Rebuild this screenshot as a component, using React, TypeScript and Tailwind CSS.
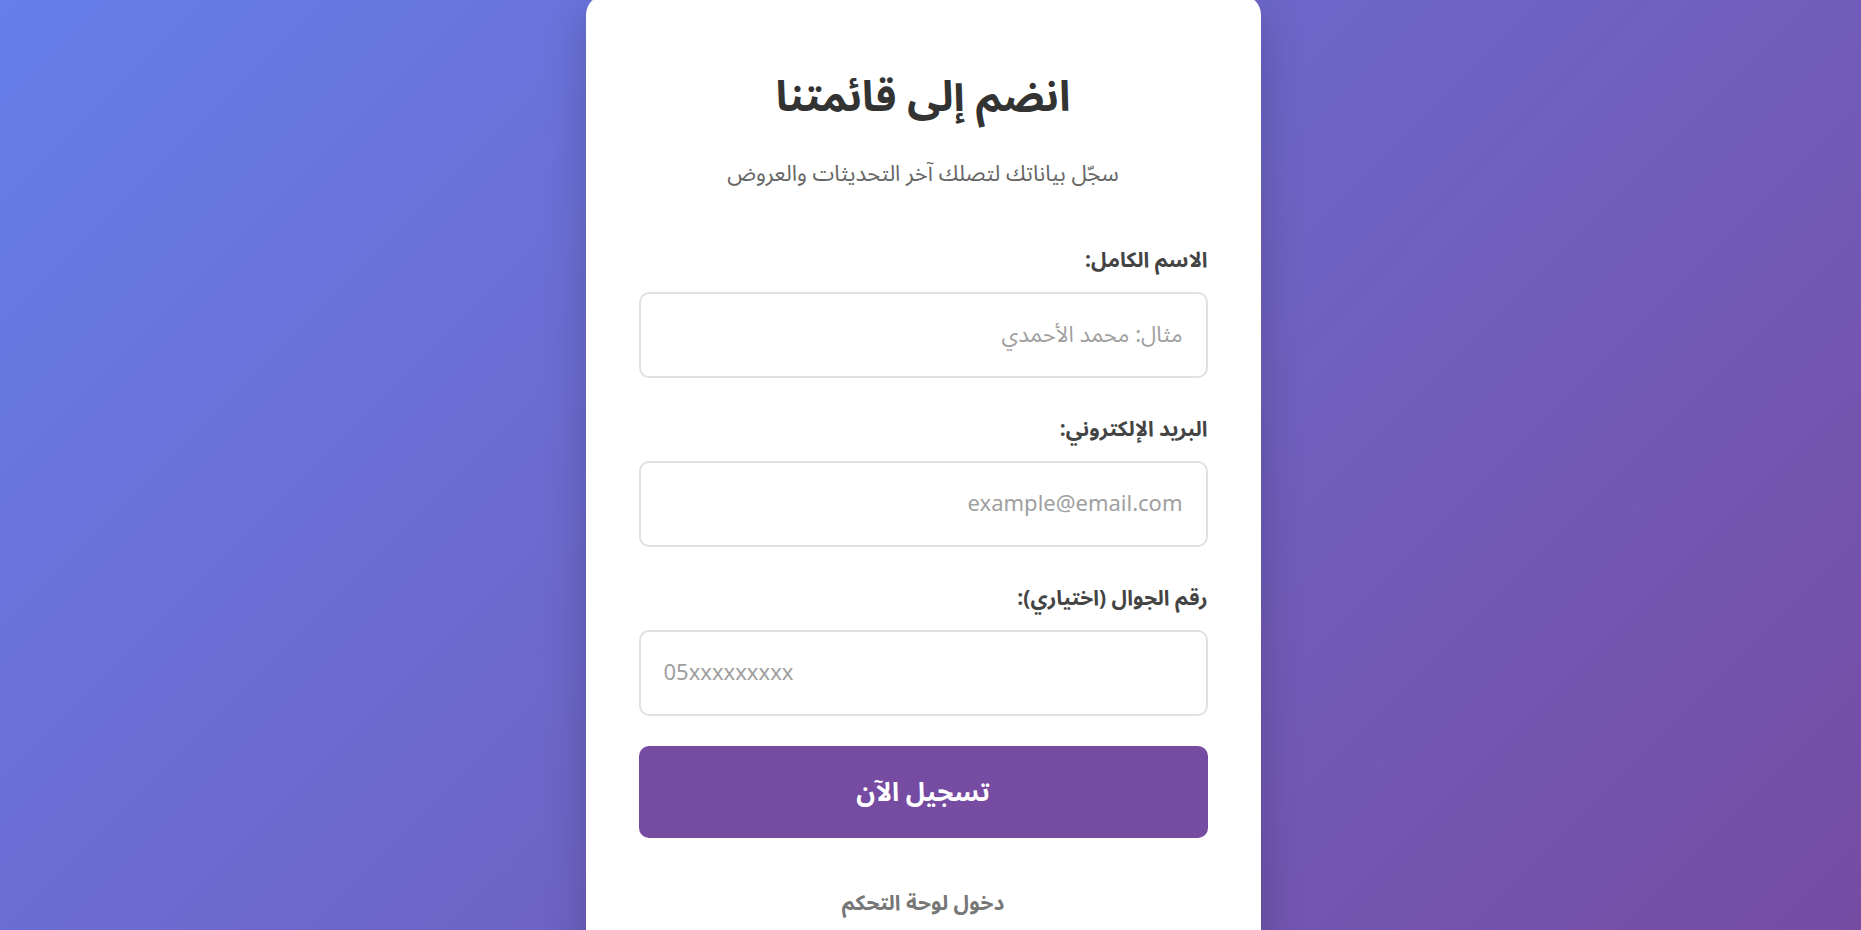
import React, { useState } from "react"

const fieldClass =
  "w-full h-[86px] px-[23px] border-2 border-[#e1e1e1] rounded-[10px] bg-white text-[22px] text-[#333] placeholder:text-[#a0a0a0] outline-none focus:border-[#764ba2]"

const labelClass = "block text-[21px] leading-[26px] font-bold text-[#444] mb-[19px]"

const App = () => {
  const [form, setForm] = useState({ name: "", email: "", phone: "" })

  const update = (key: "name" | "email" | "phone") => (e: React.ChangeEvent<HTMLInputElement>) =>
    setForm({ ...form, [key]: e.target.value })

  return (
    <div
      dir="rtl"
      className="min-h-screen w-full overflow-hidden flex justify-center bg-[linear-gradient(135deg,#667eea_0%,#764ba2_100%)] font-['Noto_Sans_Arabic','DejaVu_Sans',sans-serif]"
    >
      <div className="w-[675px] -mt-[5px] mr-[15px] bg-white rounded-[20px] px-[53px] pt-[77px] pb-[40px] shadow-[0_15px_45px_rgba(0,0,0,0.2)] self-start">
        <h1 className="text-center text-[42px] leading-[52px] font-bold text-[#333]">انضم إلى قائمتنا</h1>
        <p className="mt-[35px] text-center text-[22px] leading-[30px] text-[#666]">
          سجّل بياناتك لتصلك آخر التحديثات والعروض
        </p>

        <form className="mt-[58px]" onSubmit={(e) => e.preventDefault()}>
          <div className="mb-[38px]">
            <label htmlFor="name" className={labelClass}>
              الاسم الكامل:
            </label>
            <input
              id="name"
              type="text"
              value={form.name}
              onChange={update("name")}
              placeholder="مثال: محمد الأحمدي"
              className={fieldClass}
            />
          </div>

          <div className="mb-[38px]">
            <label htmlFor="email" className={labelClass}>
              البريد الإلكتروني:
            </label>
            <input
              id="email"
              type="email"
              value={form.email}
              onChange={update("email")}
              placeholder="example@email.com"
              className={fieldClass}
            />
          </div>

          <div className="mb-[30px]">
            <label htmlFor="phone" className={labelClass}>
              رقم الجوال (اختياري):
            </label>
            <input
              id="phone"
              type="tel"
              dir="ltr"
              value={form.phone}
              onChange={update("phone")}
              placeholder="05xxxxxxxxx"
              className={`${fieldClass} text-left`}
            />
          </div>

          <button
            type="submit"
            className="w-full h-[92px] rounded-[10px] bg-[#764ba2] text-white text-[26px] font-bold hover:bg-[#6a4192] transition"
          >
            تسجيل الآن
          </button>
        </form>

        <div className="mt-[52px] text-center">
          <a href="#" className="text-[21px] leading-[26px] font-bold text-[#777] hover:text-[#764ba2]">
            دخول لوحة التحكم
          </a>
        </div>
      </div>
    </div>
  )
}

export default App
